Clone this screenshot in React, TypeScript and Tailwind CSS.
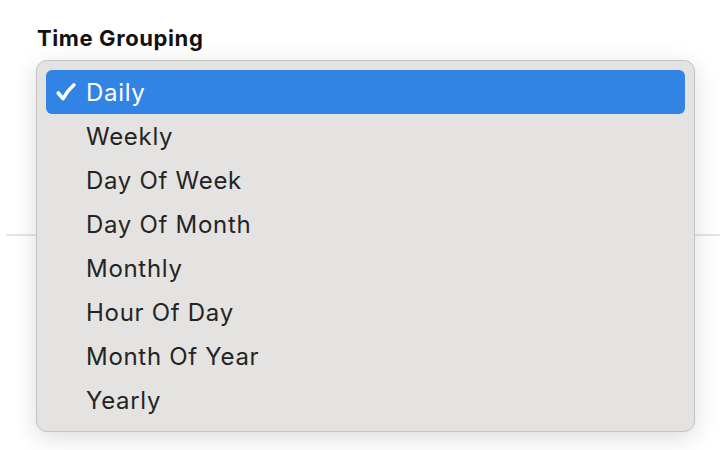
const options = [
  'Daily',
  'Weekly',
  'Day Of Week',
  'Day Of Month',
  'Monthly',
  'Hour Of Day',
  'Month Of Year',
  'Yearly',
];

function Tick() {
  return (
    <svg viewBox="0 0 20 18" className="h-[18px] w-[20px]" fill="none">
      <path d="M2.2 10 L7 15.6 Q11 8 17.8 2" stroke="currentColor" strokeWidth="3.6" strokeLinecap="round" strokeLinejoin="round" />
    </svg>
  );
}

export default function App() {
  const selected = 'Daily';

  return (
    <div className="relative w-[726px] h-[450px] overflow-hidden bg-white font-['Inter','Liberation_Sans',sans-serif]">
      <div className="px-[37px] pt-[24px]">
        <label className="block text-[22px] leading-[28px] font-bold tracking-[0.6px] text-[#111]">Time Grouping</label>
      </div>
      <div className="mt-[182px] mx-[6px] h-[2px] bg-[#e6e6e6]" />

      {/* dropdown menu */}
      <div className="absolute left-[36px] top-[60px] w-[659px] rounded-[11px] border border-[#c4c3c2] bg-[#e4e3e2] p-[9px] shadow-[0_6px_24px_rgba(0,0,0,0.14)]">
        <ul>
          {options.map(o => {
            const active = o === selected;
            return (
              <li
                key={o}
                className={`flex h-[44px] items-center rounded-[6px] ${active ? 'bg-[#3183e4] text-white' : 'text-[#242424]'}`}
              >
                <span className="flex w-[40px] shrink-0 justify-center">
                  {active && <Tick />}
                </span>
                <span className="pt-[2px] text-[24px] leading-none tracking-[0.7px]">{o}</span>
              </li>
            );
          })}
        </ul>
      </div>
    </div>
  );
}
